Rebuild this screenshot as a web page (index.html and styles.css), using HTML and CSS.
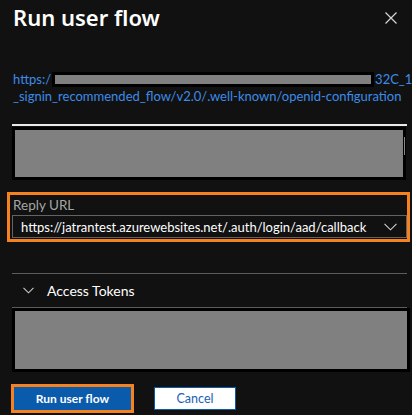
FILE: index.html
```html
<!DOCTYPE html>
<html lang="en">
<head>
    <meta charset="UTF-8">
    <meta name="viewport" content="width=device-width, initial-scale=1.0">
    <title>Run user flow</title>
    <link rel="stylesheet" href="styles.css">
</head>
<body>
    <div class="panel">
        <div class="panel-header">
            <h1>Run user flow</h1>
            <button class="close-btn" aria-label="Close">
                <svg width="12" height="12" viewBox="0 0 12 12">
                    <path d="M0.5 0.5 L11.5 11.5 M11.5 0.5 L0.5 11.5" stroke="#d6d6d6" stroke-width="1.2" fill="none"/>
                </svg>
            </button>
        </div>

        <div class="endpoint">
            <a href="#">https:/<span class="redact-inline"></span>32C_1<br>_signin_recommended_flow/v2.0/.well-known/openid-configuration</a>
        </div>

        <div class="divider-light"></div>
        <div class="redacted redacted-top"><span class="scroll-thumb"></span></div>

        <div class="highlight">
            <label class="field-label" for="replyUrl">Reply URL</label>
            <div class="select" id="replyUrl">
                <span>https://jatrantest.azurewebsites.net/.auth/login/aad/callback</span>
                <svg width="13" height="8" viewBox="0 0 13 8">
                    <path d="M0.5 0.8 L6.5 6.8 L12.5 0.8" stroke="#d0d0d0" stroke-width="1.1" fill="none"/>
                </svg>
            </div>
        </div>

        <div class="accordion">
            <div class="accordion-header">
                <svg width="11" height="7" viewBox="0 0 11 7">
                    <path d="M0.5 0.8 L5.5 5.8 L10.5 0.8" stroke="#c8c8c8" stroke-width="1.1" fill="none"/>
                </svg>
                <span>Access Tokens</span>
            </div>
        </div>
        <div class="redacted redacted-bottom"></div>

        <div class="button-group">
            <span class="highlight-btn">
                <button class="btn-primary">Run user flow</button>
            </span>
            <button class="btn-secondary">Cancel</button>
        </div>
    </div>
</body>
</html>
```

FILE: styles.css
```css
body {
    margin: 0;
    background-color: #111111;
    color: #ffffff;
    font-family: "Lato", "Noto Sans", sans-serif;
}
.panel {
    width: 395px;
    padding: 0 5px 0 12px;
}
.panel-header {
    display: flex;
    justify-content: space-between;
    align-items: flex-start;
}
h1 {
    margin: 0;
    padding-left: 1px;
    font-family: "Noto Sans", sans-serif;
    font-size: 22px;
    font-weight: 600;
    line-height: 35px;
}
.close-btn {
    background: none;
    border: none;
    padding: 0;
    margin: 12px 10px 0 0;
    line-height: 0;
}
.endpoint {
    margin-top: 36px;
    padding-left: 1px;
    font-size: 13px;
    line-height: 17px;
    white-space: nowrap;
}
.endpoint a {
    color: #3d8ce8;
    text-decoration: none;
}
.redact-inline {
    display: inline-block;
    width: 316px;
    height: 9px;
    margin: 0 1px 0 1px;
    background-color: #808080;
    border: 3px solid #000;
    vertical-align: -3px;
}
.divider-light {
    margin-top: 19px;
    height: 2px;
    background-color: #e8e8e8;
}
.redacted {
    background-color: #808080;
    border: 3px solid #000;
    box-sizing: border-box;
}
.redacted-top {
    position: relative;
    margin-top: 1px;
    width: 394px;
    height: 53px;
}
.scroll-thumb {
    position: absolute;
    right: -2px;
    top: 7px;
    width: 1px;
    height: 18px;
    background-color: #8a8a8a;
}
.highlight {
    margin: 12px -3px 0 -5px;
    padding: 1px 0 1px 2px;
    border: 3px solid #f5821f;
}
.field-label {
    display: block;
    padding-left: 1px;
    font-size: 13.5px;
    line-height: 19px;
    color: #a6a6a6;
}
.select {
    display: flex;
    justify-content: space-between;
    align-items: center;
    height: 21px;
    padding: 0 9px 0 8px;
    border: 1px solid #636363;
    font-size: 13px;
    white-space: nowrap;
}
.accordion {
    margin-top: 31px;
    border-top: 1px solid #5c5c5c;
    border-bottom: 1px solid #5c5c5c;
}
.accordion-header {
    display: flex;
    align-items: center;
    gap: 13px;
    height: 33px;
    padding-left: 11px;
    font-size: 14px;
}
.redacted-bottom {
    margin-right: -3px;
    height: 64px;
}
.button-group {
    display: flex;
    align-items: center;
    gap: 20px;
    margin-top: 12px;
}
.highlight-btn {
    display: inline-block;
    margin-left: -1px;
    border: 3px solid #f5821f;
    line-height: 0;
}
.btn-primary {
    width: 117px;
    height: 23px;
    border: none;
    background-color: #0b5bad;
    color: #ffffff;
    font-family: "Lato", sans-serif;
    font-size: 12px;
    font-weight: 700;
    cursor: pointer;
}
.btn-secondary {
    width: 82px;
    height: 23px;
    border: 1px solid #0b5bad;
    background-color: #ffffff;
    color: #1a5fb4;
    font-family: "Lato", sans-serif;
    font-size: 12.5px;
    cursor: pointer;
}
```
